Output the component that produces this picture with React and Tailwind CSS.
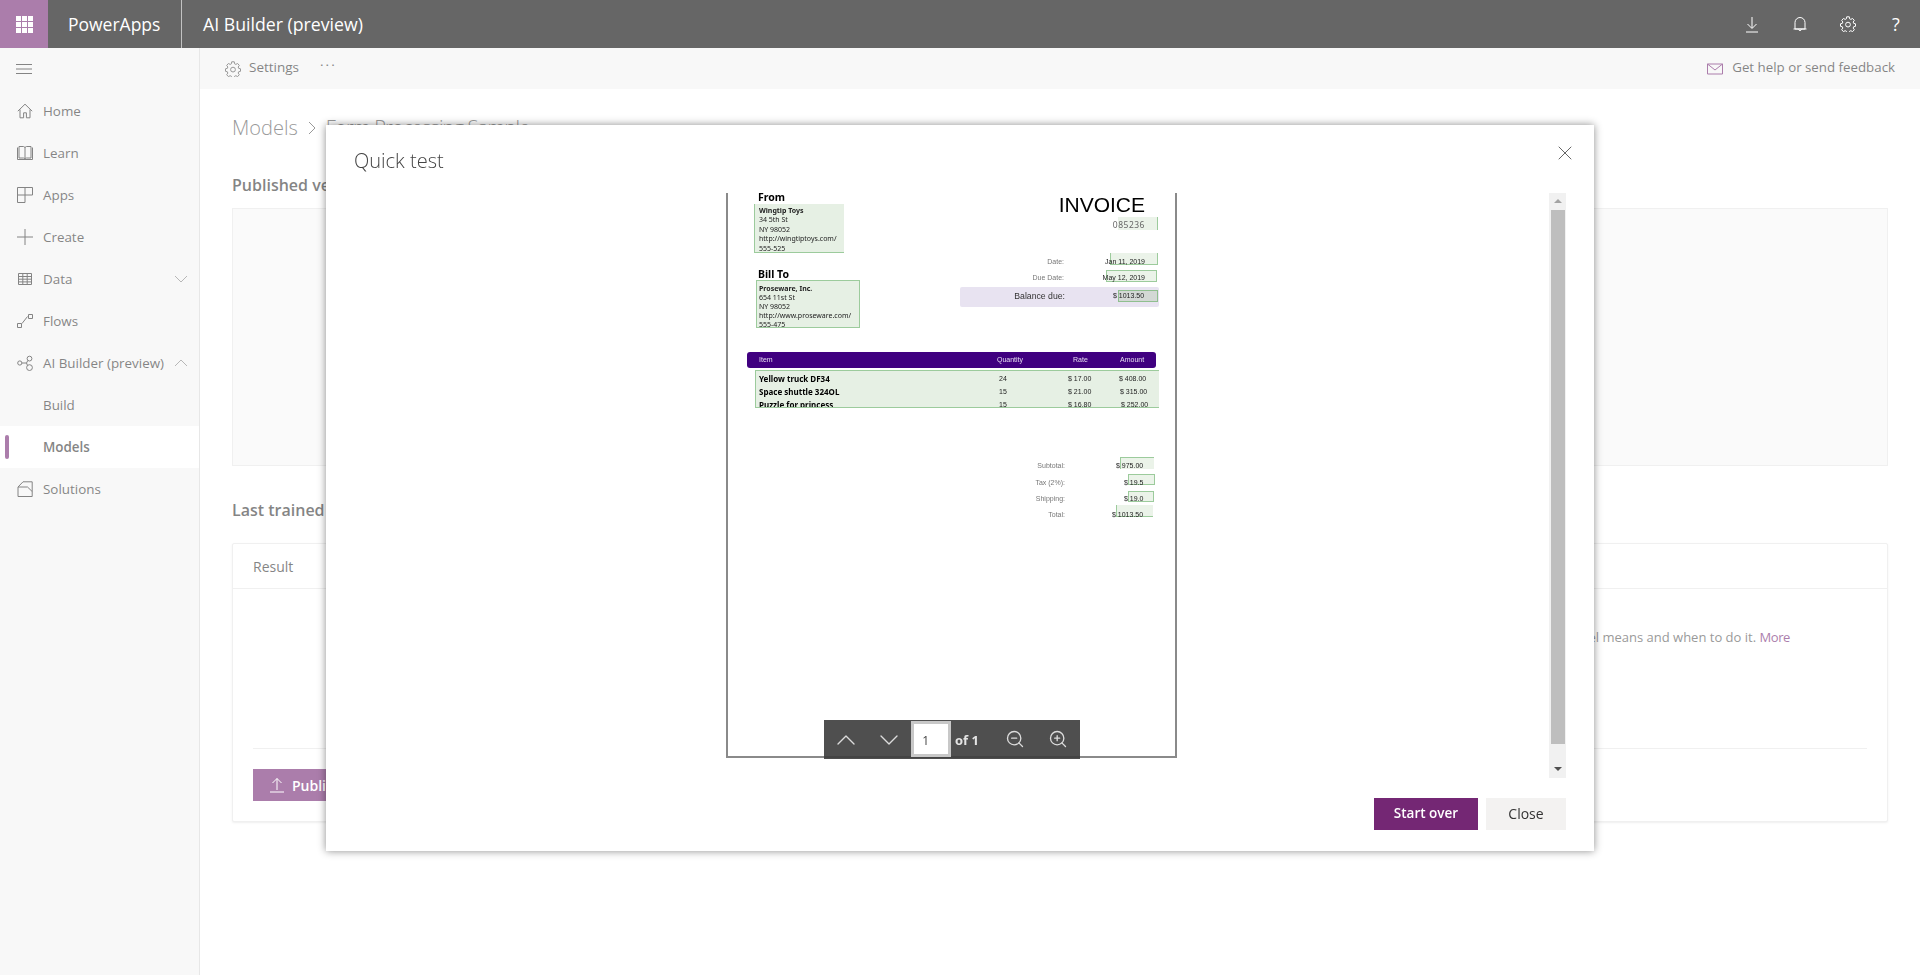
import React from "react";
import { ChevronDown, ChevronUp, ZoomIn, ZoomOut, X } from "lucide-react";

const Icon = ({ children, className = "w-4 h-4", size = 16 }) => (
  <svg viewBox={`0 0 ${size} ${size}`} fill="none" stroke="currentColor" strokeWidth="1" className={className}>
    {children}
  </svg>
);

const GearIcon = ({ className }) => (
  <svg viewBox="0 0 16 16" fill="none" stroke="currentColor" strokeWidth="1" className={className}>
    <path d="M6.7.8h2.6l.3 2 1.2.6 1.8-.9 1.7 1.9-1.1 1.6.4 1.3 1.9.5v2.5l-1.9.5-.4 1.3 1.1 1.6-1.7 1.9-1.8-.9-1.2.6-.3 2H6.7l-.3-2-1.2-.6-1.8.9-1.7-1.9 1.1-1.6-.4-1.3-1.9-.5V7.8l1.9-.5.4-1.3-1.1-1.6 1.7-1.9 1.8.9 1.2-.6z" />
    <circle cx="8" cy="8.6" r="2.4" />
  </svg>
);

const navItems = [
  {
    label: "Home",
    icon: <path d="M.8 8.2 8 1.2l7.2 7M3 6.5v8.3h3.6v-5h2.8v5H13V6.5" />,
  },
  {
    label: "Learn",
    icon: <path d="M.5 2.5v12h15v-12M2 13V1.5h4.5c.8 0 1.5.6 1.5 1.5 0-.9.7-1.5 1.5-1.5H14V13H9.5c-.8 0-1.5.4-1.5 1 0-.6-.7-1-1.5-1zM8 3v11" />,
  },
  {
    label: "Apps",
    icon: <path d="M.5.5h15v7.5H8v7.5H.5zM8 .5V8M.5 8H8" />,
  },
  { label: "Create", icon: <path d="M0 8h16M8 0v16" /> },
  {
    label: "Data",
    icon: <path d="M1.5 2.5h13v11h-13zM1.5 5.5h13M1.5 8.2h13M1.5 10.9h13M5.8 2.5v11M10.2 2.5v11" />,
    chevron: "down",
  },
  {
    label: "Flows",
    icon: <path d="M.5 10.5h4v4h-4zM11.5 1.5h4v4h-4zM5 10.5l5.5-7" />,
  },
  {
    label: "AI Builder (preview)",
    icon: (
      <>
        <circle cx="2.8" cy="8" r="2.1" />
        <circle cx="12.5" cy="3.6" r="2.4" />
        <circle cx="12.5" cy="12.6" r="2.9" />
        <path d="M5 8h4.5M10.8 5.5 9.5 8l1 2.5" />
      </>
    ),
    chevron: "up",
  },
  { label: "Build" },
  { label: "Models", active: true },
  {
    label: "Solutions",
    icon: <path d="M1 6 6 .8h9.2V15.5H1zM1 6h9.5l4.7 4.5" />,
  },
];

// highlight drawn by the form recogniser over the scanned invoice
const Mark = ({ className }) => <span className={`absolute bg-[#e6f0e4]/80 ${className}`}></span>;

const invoiceRows = [
  { item: "Yellow truck DF34", qty: "24", rate: "$ 17.00", amount: "$ 408.00", amountClass: "" },
  { item: "Space shuttle 324OL", qty: "15", rate: "$ 21.00", amount: "$ 315.00", amountClass: "pl-[1px]" },
  { item: "Puzzle for princess", qty: "15", rate: "$ 16.80", amount: "$ 252.00", amountClass: "pl-[2px]" },
];

function Invoice() {
  return (
    <div className="relative w-[451px] h-[565px] border-x-2 border-b-2 border-[#8a8a8a] bg-white">
      <div className="blur-[0.35px] text-black font-['Liberation_Sans',sans-serif]">
        <div className="flex">
          <div className="ml-[26px] w-[206px] font-['Noto_Sans',sans-serif]">
            <div className="h-[11px] leading-[9px] pl-[4px] text-[10.5px] font-bold">From</div>
            <div className="w-[90px] h-[49px] pt-[2px] pl-[4px] bg-[#e6f0e4] border-l border-b border-[#9ccb9c] text-[7px] leading-[9.6px] text-[#222] overflow-hidden">
              <div className="font-bold">Wingtip Toys</div>
              <div>34 5th St</div>
              <div>NY 98052</div>
              <div>http://wingtiptoys.com/</div>
              <div>555-525</div>
            </div>
            <div className="mt-[15px] ml-[4px] h-[12px] leading-[12px] text-[10.5px] font-bold">Bill To</div>
            <div className="ml-[2px] w-[104px] h-[48px] pt-[3px] pl-[2px] bg-[#e6f0e4] border border-[#9ccb9c] text-[7px] leading-[9.2px] text-[#222] overflow-hidden">
              <div className="font-bold">Proseware, Inc.</div>
              <div>654 11st St</div>
              <div>NY 98052</div>
              <div>http://www.proseware.com/</div>
              <div>555-475</div>
            </div>
          </div>
          <div className="w-[199px]">
            <div className="h-[24px] leading-[24px] pr-[14px] text-right text-[21px]">INVOICE</div>
            <div className="relative mt-[2px] h-[12px] leading-[12px] pr-[14px] text-right text-[8.5px] tracking-[0.5px] text-[#666] font-['Noto_Sans',sans-serif]">
              <Mark className="right-[1px] -top-[2px] w-[40px] h-[13px] border-r border-[#9ccb9c]" />
              <span className="relative">085236</span>
            </div>
            <div className="relative mt-[25px] flex h-[12px] leading-[12px] text-[7px]">
              <Mark className="right-[1px] -top-[3px] w-[48px] h-[12px] border-x border-b border-[#9ccb9c]" />
              <span className="relative w-[104px] text-right text-[#777]">Date:</span>
              <span className="relative flex-1 pr-[14px] text-right text-[#222]">Jan 11, 2019</span>
            </div>
            <div className="relative mt-[4px] flex h-[12px] leading-[12px] text-[7px]">
              <Mark className="right-[2px] -top-[2px] w-[51px] h-[12px] border-x border-y border-[#9ccb9c]" />
              <span className="relative w-[104px] text-right text-[#777]">Due Date:</span>
              <span className="relative flex-1 pr-[14px] text-right text-[#222]">May 12, 2019</span>
            </div>
            <div className="relative mt-[3px] flex items-center h-[20px] rounded-[2px] bg-[#e8e3f1] text-[8.7px]">
              <span className="absolute right-[1px] top-[3px] w-[40px] h-[12px] bg-[#d3d8d5] border border-[#8fbf8f]"></span>
              <span className="relative w-[105px] text-right text-[#333]">Balance due:</span>
              <span className="relative ml-[48px] text-[7px] text-[#222]">$ 1013.50</span>
            </div>
          </div>
        </div>

        <div className="mt-[24px] ml-[19px] w-[409px] h-[16px] flex items-center pt-[2px] pl-[12px] rounded-[3px] bg-[#400080] text-[7px] text-[#e4dcef]">
          <span className="w-[238px]">Item</span>
          <span className="w-[76px]">Quantity</span>
          <span className="w-[47px]">Rate</span>
          <span>Amount</span>
        </div>
        <div className="mt-[2px] ml-[27px] w-[404px] h-[38px] pt-[1px] pl-[3px] bg-[#e6f0e4] border-l border-y border-[#9ccb9c] overflow-hidden">
          {invoiceRows.map((row) => (
            <div key={row.item} className="flex h-[13.3px] leading-[13px] text-[7px] text-[#222]">
              <span className="w-[240px] text-[8px] font-bold font-['Noto_Sans',sans-serif] text-black">{row.item}</span>
              <span className="w-[69px]">{row.qty}</span>
              <span className="w-[51px]">{row.rate}</span>
              <span className={row.amountClass}>{row.amount}</span>
            </div>
          ))}
        </div>

        <div className="relative mt-[52px] flex h-[12px] leading-[12px] text-[7px]">
          <Mark className="left-[392px] -top-[3px] w-[34px] h-[12px] border-l border-t border-[#9ccb9c]" />
          <span className="relative w-[337px] text-right text-[#777]">Subtotal:</span>
          <span className="relative pl-[51px] text-[#222]">$ 975.00</span>
        </div>
        <div className="relative mt-[5px] flex h-[12px] leading-[12px] text-[7px]">
          <Mark className="left-[400px] -top-[3px] w-[27px] h-[11px] border border-[#9ccb9c]" />
          <span className="relative w-[337px] text-right text-[#777]">Tax (2%):</span>
          <span className="relative pl-[59px] text-[#222]">$ 19.5</span>
        </div>
        <div className="relative mt-[4px] flex h-[12px] leading-[12px] text-[7px]">
          <Mark className="left-[400px] -top-[2px] w-[26px] h-[11px] border border-[#9ccb9c]" />
          <span className="relative w-[337px] text-right text-[#777]">Shipping:</span>
          <span className="relative pl-[59px] text-[#222]">$ 19.0</span>
        </div>
        <div className="relative mt-[4px] flex h-[12px] leading-[12px] text-[7px]">
          <Mark className="left-[388px] -top-[4px] w-[37px] h-[12px] border-l border-b border-[#9ccb9c]" />
          <span className="relative w-[337px] text-right text-[#777]">Total:</span>
          <span className="relative pl-[47px] text-[#222]">$ 1013.50</span>
        </div>
      </div>

      <div className="absolute left-[96px] -bottom-[3px] w-[256px] h-[39px] flex items-center bg-[#3c3c3c]/90 text-[#dcdcdc]">
        <div className="w-[44px] pt-[1px] flex justify-center">
          <ChevronUp className="w-[32px] h-[32px]" strokeWidth={1} />
        </div>
        <div className="w-[44px] pt-[1px] flex justify-center">
          <ChevronDown className="w-[32px] h-[32px]" strokeWidth={1} />
        </div>
        <div className="w-[40px] h-[36px] flex items-center pl-[8px] pt-[3px] bg-white border-[3px] border-[#c8c8c8] text-[12px] text-[#444] font-['Open_Sans',sans-serif]">
          1
        </div>
        <span className="ml-[4px] w-[38px] pt-[3px] text-[13px] font-bold text-[#e4e4e4] font-['Open_Sans',sans-serif]">of 1</span>
        <div className="w-[44px] flex justify-center">
          <ZoomOut className="w-[20px] h-[20px]" strokeWidth={1.6} />
        </div>
        <div className="w-[44px] flex justify-center">
          <ZoomIn className="w-[20px] h-[20px]" strokeWidth={1.6} />
        </div>
      </div>
    </div>
  );
}

function QuickTest() {
  return (
    <div className="fixed inset-0 bg-white/40 flex items-center justify-center">
      <div className="w-[1268px] h-[726px] px-[28px] bg-white shadow-[0_0_8px_rgba(0,0,0,0.45)] flex flex-col">
        <div className="h-[68px] shrink-0 flex justify-between">
          <h2 className="mt-[22px] text-[20px] leading-[28px] font-light text-[#444]">Quick test</h2>
          <X className="mt-[16px] -mr-[11px] w-[24px] h-[24px] text-[#666]" strokeWidth={1} />
        </div>
        <div className="h-[585px] shrink-0 flex">
          <div className="flex-1 flex justify-center">
            <Invoice />
          </div>
          <div className="w-[17px] flex flex-col items-center bg-[#f1f1f1]">
            <div className="h-[17px] flex items-center justify-center">
              <svg viewBox="0 0 8 4" className="w-[8px] h-[4px] fill-[#a3a3a3]">
                <path d="M4 0l4 4H0z" />
              </svg>
            </div>
            <div className="w-[14px] flex-1 bg-[#bebebe]"></div>
            <div className="h-[18px] mt-[16px] flex items-center justify-center">
              <svg viewBox="0 0 8 4" className="w-[8px] h-[4px] fill-[#505050]">
                <path d="M4 4l4-4H0z" />
              </svg>
            </div>
          </div>
        </div>
        <div className="mt-[20px] flex justify-end gap-2">
          <button className="w-[104px] h-[32px] bg-[#742774] text-white text-[13.5px] font-semibold">Start over</button>
          <button className="w-[80px] h-[32px] bg-[#f3f2f1] text-[#333] text-[14px]">Close</button>
        </div>
      </div>
    </div>
  );
}

export default function App() {
  return (
    <div className="h-[975px] overflow-hidden bg-white text-[#333] font-['Open_Sans',sans-serif]">
      <header className="h-12 flex items-center bg-black text-white">
        <div className="w-12 h-12 flex items-center justify-center bg-[#742774]">
          <div className="grid grid-cols-3 gap-[1px]">
            {[1, 2, 3, 4, 5, 6, 7, 8, 9].map((n) => (
              <span key={n} className="w-[5px] h-[5px] bg-white"></span>
            ))}
          </div>
        </div>
        <div className="w-[134px] h-12 flex items-center pl-[20px] border-r border-[#999] text-[17.5px]">PowerApps</div>
        <div className="ml-[21px] text-[17.7px]">AI Builder (preview)</div>
        <div className="ml-auto flex">
          <div className="w-12 h-12 flex items-center justify-center">
            <Icon className="w-4 h-[18px]">
              <path d="M8 1v11M3.5 8 8 12.5 12.5 8M2 16h12" />
            </Icon>
          </div>
          <div className="w-12 h-12 flex items-center justify-center">
            <Icon className="w-4 h-4">
              <path d="M3 13V6.5a5 5 0 0 1 10 0V13zM1.5 13h13M6.5 13.5a1.6 1.6 0 0 0 3 0" />
            </Icon>
          </div>
          <div className="w-12 h-12 flex items-center justify-center">
            <GearIcon className="w-4 h-4" />
          </div>
          <div className="w-12 h-12 flex items-center justify-center text-[18px]">?</div>
        </div>
      </header>

      <div className="flex h-[927px]">
        <aside className="w-[200px] shrink-0 bg-[#f3f3f3] border-r border-[#d8d8d8] text-[13.4px]">
          <div className="h-[42px] flex items-center pl-[16px]">
            <Icon className="w-4 h-4">
              <path d="M0 3.5h16M0 8h16M0 12.5h16" />
            </Icon>
          </div>
          {navItems.map((item) => (
            <div
              key={item.label}
              className={`relative h-[42px] flex items-center ${item.active ? "bg-white font-semibold" : ""}`}
            >
              {item.active && <span className="absolute left-[5px] top-[9px] w-[4px] h-[24px] rounded-[2px] bg-[#742774]"></span>}
              <div className="w-[43px] pl-[17px] shrink-0">{item.icon && <Icon className="w-4 h-4">{item.icon}</Icon>}</div>
              <span className="whitespace-nowrap">{item.label}</span>
              {item.chevron === "down" && (
                <Icon className="absolute right-[12px] w-3 h-3 text-[#888]" size={12}>
                  <path d="M0 3l6 6 6-6" />
                </Icon>
              )}
              {item.chevron === "up" && (
                <Icon className="absolute right-[12px] w-3 h-3 text-[#888]" size={12}>
                  <path d="M0 9l6-6 6 6" />
                </Icon>
              )}
            </div>
          ))}
        </aside>

        <main className="flex-1 min-w-0">
          <div className="h-[41px] flex items-center bg-[#f3f3f3] text-[13.5px]">
            <GearIcon className="ml-[25px] w-4 h-4 text-[#555]" />
            <span className="ml-[8px] pb-[2px]">Settings</span>
            <span className="ml-[21px] tracking-[2px] leading-none mb-[6px]">···</span>
            <div className="ml-auto mr-[25px] flex items-center">
              <Icon className="w-4 h-4 text-[#742774]">
                <path d="M.5 3h15v10H.5zM.5 3 8 9l7.5-6" />
              </Icon>
              <span className="ml-[9px] pb-[1px] text-[13.3px]">Get help or send feedback</span>
            </div>
          </div>

          <div className="px-[32px]">
            <div className="mt-[25px] flex items-center h-[28px] text-[20px] font-light text-[#555]">
              <span>Models</span>
              <Icon className="mx-[8px] w-3 h-3" size={12}>
                <path d="M3 0l6 6-6 6" />
              </Icon>
              <span className="tracking-[-0.8px]">Form Processing Sample</span>
            </div>
            <h3 className="mt-[31px] h-[24px] text-[16px] leading-[24px] font-semibold">Published version</h3>
            <div className="mt-[11px] h-[258px] bg-[#f7f7f7] border border-[#e6e6e6]"></div>
            <h3 className="mt-[32px] h-[24px] text-[16px] leading-[24px] font-semibold">Last trained version</h3>
            <div className="mt-[21px] h-[279px] rounded-[2px] bg-white border border-[#e6e6e6] flex flex-col shadow-[0_1px_2px_rgba(0,0,0,0.1)]">
              <div className="h-[45px] flex items-center pl-[20px] border-b border-[#e6e6e6] text-[14px]">Result</div>
              <div className="flex-1 flex items-center justify-end pr-[97px] pb-[62px] text-[13px] text-[#555]">
                <span>
                  Learn what publishing a model means and when to do it.{" "}
                  <span className="tracking-[-0.4px] text-[#742774]">More</span>
                </span>
              </div>
              <div className="mx-[20px] h-[73px] pt-[20px] border-t border-[#e6e6e6]">
                <button className="w-[160px] h-[32px] flex items-center pl-[16px] bg-[#742774] text-white text-[14px] font-semibold">
                  <Icon className="w-4 h-4 mr-[7px]">
                    <path d="M8 13V1.5M3.5 6 8 1.5 12.5 6M1 15h14" />
                  </Icon>
                  Publish
                </button>
              </div>
            </div>
          </div>
        </main>
      </div>

      <QuickTest />
    </div>
  );
}
